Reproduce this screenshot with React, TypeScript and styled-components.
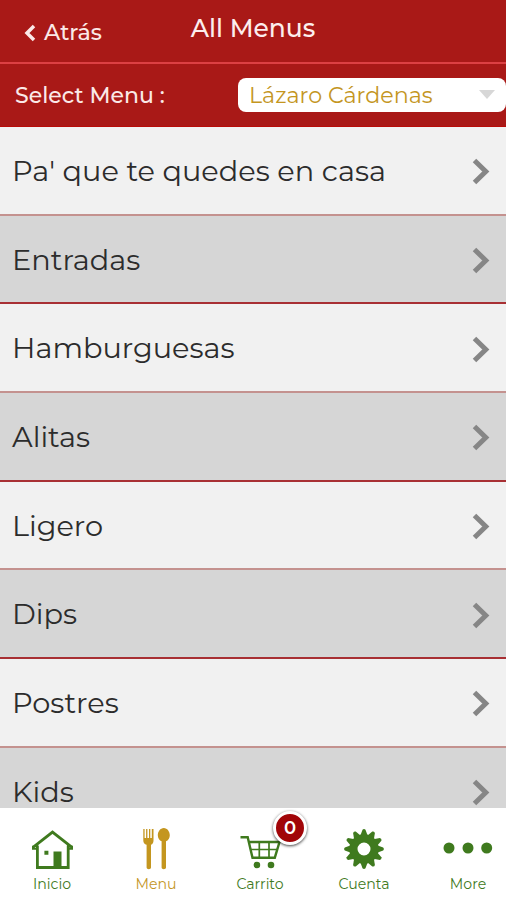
import React from "react";
import styled, { createGlobalStyle } from "styled-components";

const red = "#a91917";
const green = "#3f7a1e";
const gold = "#c4961f";

const GlobalStyle = createGlobalStyle`
  *, *::before, *::after { box-sizing: border-box; }
  body { margin: 0; font-family: Montserrat, Inter, sans-serif; background: #fff; }
  button { font: inherit; border: 0; padding: 0; background: none; color: inherit; }
`;

const Screen = styled.div`
  display: flex;
  flex-direction: column;
  width: 100%;
  height: 100vh;
  overflow: hidden;
`;

const Header = styled.header`
  display: grid;
  grid-template-columns: 1fr auto 1fr;
  flex: none;
  height: 64px;
  padding: 0 23px;
  background: ${red};
  border-bottom: 2px solid #dc4043;
  color: #fff;
`;

const Back = styled.button`
  display: flex;
  align-items: center;
  gap: 8px;
  height: 65px;
  font-size: 22.2px;
  font-weight: 500;
  line-height: 28px;
  color: #fbe9e8;
  white-space: nowrap;
`;

const Title = styled.h1`
  margin: 0;
  font-size: 25px;
  font-weight: 500;
  line-height: 56px;
  color: #fdeeee;
  white-space: nowrap;
`;

const Filter = styled.div`
  display: flex;
  align-items: center;
  justify-content: space-between;
  flex: none;
  height: 63px;
  padding: 1px 0 0 15px;
  background: ${red};
  border-bottom: 1px solid #b90b08;
`;

const FilterLabel = styled.span`
  font-size: 22px;
  font-weight: 500;
  line-height: 28px;
  color: #fbe9e8;
  white-space: nowrap;
`;

const Select = styled.button`
  display: flex;
  align-items: center;
  justify-content: space-between;
  width: 268px;
  height: 34px;
  margin-top: -1px;
  padding: 0 11px;
  border-radius: 8px;
  background: #fff;
  font-size: 22.2px;
  font-weight: 400;
  color: ${gold};
  white-space: nowrap;
`;

const List = styled.main`
  flex: 1;
  min-height: 0;
  overflow: hidden;
`;

const Row = styled.div<{ $shaded: boolean }>`
  display: flex;
  align-items: center;
  justify-content: space-between;
  height: 88.7px;
  padding: 2px 15px 0 12px;
  background: ${(p) => (p.$shaded ? "#d6d6d6" : "#f1f1f1")};
  border-bottom: 2px solid ${(p) => (p.$shaded ? "#a83034" : "#c4928f")};
`;

const RowName = styled.span`
  margin-bottom: 2px;
  font-size: 28.8px;
  font-weight: 400;
  line-height: 29px;
  color: #2c2c2c;
  white-space: nowrap;
`;

const TabBar = styled.nav`
  display: flex;
  flex: none;
  height: 92px;
  background: #fff;
`;

const Tab = styled.button<{ $active?: boolean }>`
  display: flex;
  flex: 0 0 104px;
  flex-direction: column;
  align-items: center;
  padding-top: 20px;
  color: ${(p) => (p.$active ? gold : green)};
  svg { display: block; flex: none; }
`;

const TabLabel = styled.span`
  margin-top: 5px;
  font-size: 14.1px;
  line-height: 18px;
`;

const IconSlot = styled.span`
  position: relative;
  display: block;
  height: 42px;
`;

const Badge = styled.span`
  position: absolute;
  left: 35px;
  top: -17px;
  width: 34px;
  height: 34px;
  border: 3px solid #fff;
  border-radius: 50%;
  background: #a10508;
  box-shadow: 0 1px 3px rgba(0, 0, 0, 0.75);
  color: #fff;
  font-size: 18px;
  font-weight: 600;
  line-height: 28px;
  text-align: center;
`;

const HomeIcon = () => (
  <svg width="44" height="42" viewBox="0 0 44 42" fill="none" stroke="currentColor" strokeWidth="2.8">
    <path d="M3 19.3 22.5 4.1 42 19.3M7.4 17.5V39.5h30.8V17.5" />
    <path d="M3 17.7v3h4.5M42 17.7v3h-4" strokeWidth="2" />
    <path d="M14.4 22.8h4v4h-4zM23.5 23.5h8v15.5h-8z" fill="currentColor" stroke="none" />
  </svg>
);

const CutleryIcon = () => (
  <svg width="44" height="42" viewBox="0 0 44 42" fill="currentColor">
    <path d="M9.3 1h1.3v9h1.5V1h1.3v9h1.6V1h1.3v9h1.5V1H19.5v11.5c0 2.3-1 3.6-2.5 4.3V39.500c0 2.200-4.400 2.200-4.400 0V16.800c-2.200-.7-3.300-2-3.300-4.300z" />
    <path d="M29.8 0c3.5 0 6 3.7 6 7.2 0 3-1.6 5.1-3.8 6.1v26.2c0 2.2-4.400 2.200-4.400 0V13.300c-2.200-1-3.800-3.100-3.800-6.100 0-3.500 2.500-7.200 6-7.200z" />
  </svg>
);

const CartIcon = () => (
  <svg width="44" height="42" viewBox="0 0 44 42" fill="none" stroke="currentColor" strokeWidth="2.4">
    <path d="M2.5 9.3h7.200L14.500 29.700h22.300L41.500 14H11" />
    <path d="M13 21.5h26M21.300 14v15M31 14v15" strokeWidth="1.7" />
    <circle cx="18.9" cy="37" r="3.3" fill="currentColor" stroke="none" />
    <circle cx="33" cy="37" r="3.3" fill="currentColor" stroke="none" />
  </svg>
);

const teeth = Array.from({ length: 12 }, (_, i) => i * 30);

const GearIcon = () => (
  <svg width="42" height="42" viewBox="0 0 42 42" fill="currentColor">
    <circle cx="21" cy="21" r="10.6" fill="none" stroke="currentColor" strokeWidth="8.2" />
    {teeth.map((a) => (
      <path key={a} d="M17.2 8 19.5 1.8Q21 .2 22.5 1.8L24.8 8z" transform={`rotate(${a} 21 21)`} />
    ))}
  </svg>
);

const MoreIcon = () => (
  <svg width="50" height="42" viewBox="0 0 50 42" fill="currentColor">
    <circle cx="6" cy="20" r="5.5" />
    <circle cx="25" cy="20" r="5.5" />
    <circle cx="43.7" cy="20" r="5.5" />
  </svg>
);

const BackIcon = () => (
  <svg width="13" height="18" viewBox="0 0 13 18" fill="none" stroke="currentColor" strokeWidth="3.5">
    <path d="M11 2 4 9l7 7" />
  </svg>
);

const Chevron = () => (
  <svg width="20" height="28" viewBox="0 0 20 28" fill="none" stroke="#868686" strokeWidth="5">
    <path d="M3.5 3.5 14.8 14.5 3.5 25.5" />
  </svg>
);

const Caret = () => (
  <svg width="16" height="10" viewBox="0 0 16 10" fill="#d7d7d7">
    <path d="M0 0h16L8 9z" />
  </svg>
);

const menus = [
  "Pa' que te quedes en casa",
  "Entradas",
  "Hamburguesas",
  "Alitas",
  "Ligero",
  "Dips",
  "Postres",
  "Kids",
];

const tabs = [
  { label: "Inicio", icon: <HomeIcon /> },
  { label: "Menu", icon: <CutleryIcon />, active: true },
  { label: "Carrito", icon: <CartIcon />, count: 0 },
  { label: "Cuenta", icon: <GearIcon /> },
  { label: "More", icon: <MoreIcon /> },
];

export default function App() {
  return (
    <Screen>
      <GlobalStyle />
      <Header>
        <Back><BackIcon />Atrás</Back>
        <Title>All Menus</Title>
      </Header>
      <Filter>
        <FilterLabel>Select Menu :</FilterLabel>
        <Select>Lázaro Cárdenas<Caret /></Select>
      </Filter>
      <List>
        {menus.map((name, i) => (
          <Row key={name} $shaded={i % 2 === 1}>
            <RowName>{name}</RowName>
            <Chevron />
          </Row>
        ))}
      </List>
      <TabBar>
        {tabs.map((t) => (
          <Tab key={t.label} $active={t.active}>
            <IconSlot>
              {t.icon}
              {t.count !== undefined && <Badge>{t.count}</Badge>}
            </IconSlot>
            <TabLabel>{t.label}</TabLabel>
          </Tab>
        ))}
      </TabBar>
    </Screen>
  );
}
